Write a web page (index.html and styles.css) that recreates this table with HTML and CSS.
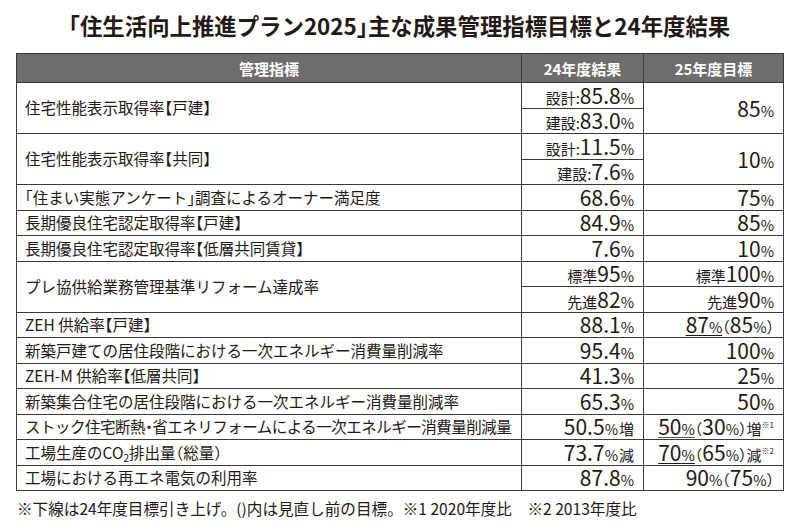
FILE: index.html
```html
<!DOCTYPE html>
<html lang="ja">
<head>
<meta charset="utf-8">
<link rel="stylesheet" href="styles.css">
</head>
<body>
<div class="page">
  <h1 class="title"><span class="p">「</span>住生活向上推進プラン2025<span class="p">」</span>主な成果管理指標目標と24年度結果</h1>
  <table class="kpi">
    <colgroup><col class="c1"><col class="c2"><col class="c3"></colgroup>
    <thead>
      <tr><th>管理指標</th><th>24年度結果</th><th>25年度目標</th></tr>
    </thead>
    <tbody>
      <tr>
        <td class="name" rowspan="2">住宅性能表示取得率<span class="p">【</span>戸建<span class="p">】</span></td>
        <td class="val"><span class="lbl">設計<span class="p">:</span></span><span class="num">85.8</span><span class="pct">%</span></td>
        <td class="val" rowspan="2"><span class="num">85</span><span class="pct">%</span></td>
      </tr>
      <tr>
        <td class="val"><span class="lbl">建設<span class="p">:</span></span><span class="num">83.0</span><span class="pct">%</span></td>
      </tr>
      <tr>
        <td class="name" rowspan="2">住宅性能表示取得率<span class="p">【</span>共同<span class="p">】</span></td>
        <td class="val"><span class="lbl">設計<span class="p">:</span></span><span class="num">11.5</span><span class="pct">%</span></td>
        <td class="val" rowspan="2"><span class="num">10</span><span class="pct">%</span></td>
      </tr>
      <tr>
        <td class="val"><span class="lbl">建設<span class="p">:</span></span><span class="num">7.6</span><span class="pct">%</span></td>
      </tr>
      <tr>
        <td class="name"><span class="p">「</span>住まい実態アンケート<span class="p">」</span>調査によるオーナー満足度</td>
        <td class="val"><span class="num">68.6</span><span class="pct">%</span></td>
        <td class="val"><span class="num">75</span><span class="pct">%</span></td>
      </tr>
      <tr>
        <td class="name">長期優良住宅認定取得率<span class="p">【</span>戸建<span class="p">】</span></td>
        <td class="val"><span class="num">84.9</span><span class="pct">%</span></td>
        <td class="val"><span class="num">85</span><span class="pct">%</span></td>
      </tr>
      <tr>
        <td class="name">長期優良住宅認定取得率<span class="p">【</span>低層共同賃貸<span class="p">】</span></td>
        <td class="val"><span class="num">7.6</span><span class="pct">%</span></td>
        <td class="val"><span class="num">10</span><span class="pct">%</span></td>
      </tr>
      <tr>
        <td class="name" rowspan="2">プレ協供給業務管理基準リフォーム達成率</td>
        <td class="val"><span class="lbl">標準</span><span class="num">95</span><span class="pct">%</span></td>
        <td class="val"><span class="lbl">標準</span><span class="num">100</span><span class="pct">%</span></td>
      </tr>
      <tr>
        <td class="val"><span class="lbl">先進</span><span class="num">82</span><span class="pct">%</span></td>
        <td class="val"><span class="lbl">先進</span><span class="num">90</span><span class="pct">%</span></td>
      </tr>
      <tr>
        <td class="name">ZEH 供給率<span class="p">【</span>戸建<span class="p">】</span></td>
        <td class="val"><span class="num">88.1</span><span class="pct">%</span></td>
        <td class="val"><span class="ul"><span>87</span><small>%</small></span><span class="par">（</span><span class="num">85</span><span class="pct">%</span><span class="par">）</span></td>
      </tr>
      <tr>
        <td class="name">新築戸建ての居住段階における一次エネルギー消費量削減率</td>
        <td class="val"><span class="num">95.4</span><span class="pct">%</span></td>
        <td class="val"><span class="num">100</span><span class="pct">%</span></td>
      </tr>
      <tr>
        <td class="name">ZEH-M 供給率<span class="p">【</span>低層共同<span class="p">】</span></td>
        <td class="val"><span class="num">41.3</span><span class="pct">%</span></td>
        <td class="val"><span class="num">25</span><span class="pct">%</span></td>
      </tr>
      <tr>
        <td class="name">新築集合住宅の居住段階における一次エネルギー消費量削減率</td>
        <td class="val"><span class="num">65.3</span><span class="pct">%</span></td>
        <td class="val"><span class="num">50</span><span class="pct">%</span></td>
      </tr>
      <tr>
        <td class="name tight">ストック住宅断熱<span class="p">・</span>省エネリフォームによる一次エネルギー消費量削減量</td>
        <td class="val"><span class="num">50.5</span><span class="pct">%</span><span class="unit">増</span></td>
        <td class="val"><span class="ul lt"><span>50</span><small>%</small></span><span class="par">（</span><span class="num">30</span><span class="pct">%</span><span class="par">）</span><span class="unit u2">増</span><span class="note">※1</span></td>
      </tr>
      <tr>
        <td class="name">工場生産のCO<sub>2</sub>排出量<span class="p">（</span>総量<span class="p">）</span></td>
        <td class="val"><span class="num">73.7</span><span class="pct">%</span><span class="unit">減</span></td>
        <td class="val"><span class="ul"><span>70</span><small>%</small></span><span class="par">（</span><span class="num">65</span><span class="pct">%</span><span class="par">）</span><span class="unit u2">減</span><span class="note">※2</span></td>
      </tr>
      <tr>
        <td class="name">工場における再エネ電気の利用率</td>
        <td class="val"><span class="num">87.8</span><span class="pct">%</span></td>
        <td class="val"><span class="num">90</span><span class="pct">%</span><span class="par">（</span><span class="num">75</span><span class="pct">%</span><span class="par">）</span></td>
      </tr>
    </tbody>
  </table>
  <p class="foot">※下線は24年度目標引き上げ。()内は見直し前の目標。※1 2020年度比　※2 2013年度比</p>
</div>
</body>
</html>
```

FILE: styles.css
```css
html, body {
  margin: 0;
  padding: 0;
  background: #ffffff;
}
body {
  font-family: "Noto Sans CJK JP", "Noto Sans", sans-serif;
  color: #231815;
}
.page {
  padding: 0 17px 0 16px;
}
.p {
  font-feature-settings: "halt";
}
.title {
  margin: 0;
  height: 53px;
  line-height: 50px;
  font-size: 22.4px;
  font-weight: 700;
  text-align: center;
}
.kpi {
  width: 767px;
  border-collapse: collapse;
  table-layout: fixed;
  border: 1.5px solid #3a3a3a;
}
.c1 { width: 505px; }
.c2 { width: 122px; }
.c3 { width: 140px; }
.kpi th {
  height: 28px;
  padding: 0;
  background: #6f6c6c;
  color: #ffffff;
  font-size: 15px;
  font-weight: 700;
  line-height: 1;
  border: 1px solid #3a3a3a;
}
.kpi td {
  height: 24.5px;
  border: 1px solid #3a3a3a;
  padding: 0;
  line-height: 1;
  vertical-align: middle;
  white-space: nowrap;
}
.name {
  padding-left: 8px !important;
  font-size: 15.5px;
}
.name.tight {
  letter-spacing: -0.5px;
}
.name sub {
  font-size: 10px;
  vertical-align: -3px;
  line-height: 0;
}
.val {
  text-align: right;
  padding-right: 9px !important;
}
.val > span {
  display: inline-block;
  line-height: 1;
}
.num {
  font-size: 21px;
}
.pct {
  font-size: 14.5px;
}
.lbl {
  font-size: 15px;
}
.unit {
  font-size: 15px;
  margin-left: 1px;
}
.u2 {
  margin-left: 0;
}
.par {
  font-size: 15px;
  font-feature-settings: "halt";
}
.ul {
  font-size: 21px;
  text-decoration: underline;
  text-decoration-thickness: 1px;
  text-underline-offset: 2px;
  text-decoration-color: #231815;
  text-decoration-skip-ink: none;
}
.ul small {
  font-size: 14.5px;
}
.ul.lt {
  text-decoration-color: #5a5a5a;
}
.val > .note {
  font-size: 8px;
  vertical-align: 7px;
}
.foot {
  margin: 6px 0 0 1px;
  font-size: 15.6px;
  line-height: 22px;
}
```
